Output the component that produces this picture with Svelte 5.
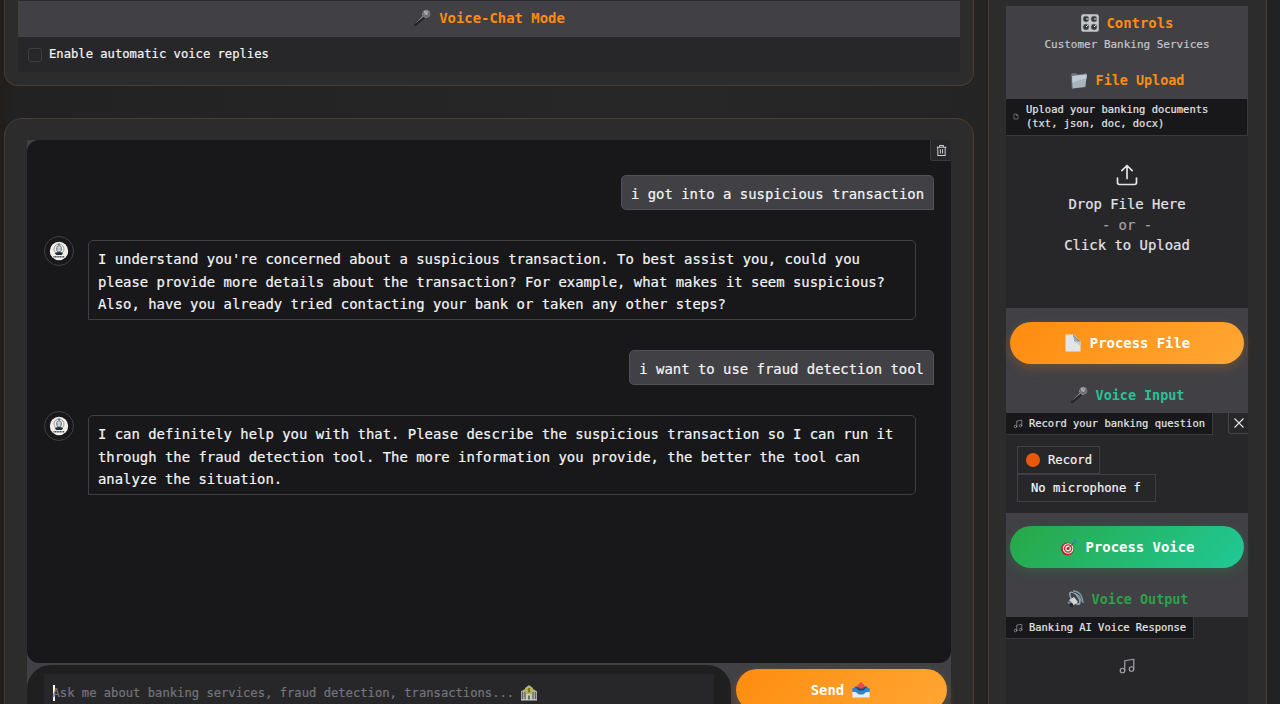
<script>
  const messages = [
    { from: 'user', lines: ['i got into a suspicious transaction'] },
    {
      from: 'bot',
      lines: [
        "I understand you're concerned about a suspicious transaction. To best assist you, could you",
        'please provide more details about the transaction? For example, what makes it seem suspicious?',
        'Also, have you already tried contacting your bank or taken any other steps?'
      ]
    },
    { from: 'user', lines: ['i want to use fraud detection tool'] },
    {
      from: 'bot',
      lines: [
        'I can definitely help you with that. Please describe the suspicious transaction so I can run it',
        'through the fraud detection tool. The more information you provide, the better the tool can',
        'analyze the situation.'
      ]
    }
  ];
</script>

{#snippet mic()}
  <svg class="emoji" viewBox="0 0 18 18">
    <path d="M1 16.6 L2.6 17.3 L12.2 9 L9.2 6 L.8 15.4Z" fill="#242427" />
    <path d="M1.2 15.4 L9.6 6.4 L10.7 7.4Z" fill="#8a8a8e" />
    <path d="M8.8 5.4 L12.5 9.1 L13.8 8.2 L9.8 4.2Z" fill="#c4c4c7" />
    <circle cx="13.3" cy="4.8" r="4" fill="#77777a" />
    <circle cx="13" cy="3.8" r="2.2" fill="#b4b4b7" />
    <path d="M10 3.2 L14.8 8 M12 1.5 L16.6 6.1 M10 6.3 L15 1.3 M12 8 L17 3" stroke="#58585c" stroke-width=".4" />
  </svg>
{/snippet}

{#snippet notes()}
  <svg class="notes" viewBox="0 0 24 24" fill="none" stroke="currentColor" stroke-width="1.6" stroke-linecap="round" stroke-linejoin="round">
    <path d="M9 18V5l12-2v13" /><circle cx="6" cy="18" r="3" /><circle cx="18" cy="16" r="3" />
  </svg>
{/snippet}

<div class="app">
  <main>
    <section class="panel voice-mode">
      <h3 class="bar">{@render mic()}Voice-Chat Mode</h3>
      <label class="check"><span class="box"></span>Enable automatic voice replies</label>
    </section>

    <section class="panel chat-panel">
      <div class="stack">
        <div class="chat">
          <button class="trash" aria-label="Clear">
            <svg viewBox="0 0 12 13" fill="none" stroke="#d0d0d3" stroke-width="1.1">
              <path d="M.8 3h10.4M4 2.8V1h4v1.8M2 3v9h8V3M4.8 5.2v4.6M7.2 5.2v4.6" />
            </svg>
          </button>
          {#each messages as m}
            <div class="row {m.from}">
              {#if m.from === 'bot'}
                <span class="avatar">
                  <svg viewBox="0 0 20 20">
                    <circle cx="10" cy="10" r="9.2" fill="#f2eeea" />
                    <circle cx="10" cy="8" r="5" fill="none" stroke="#6d7980" stroke-width=".7" />
                    <path d="M7.6 7.2a2.4 2.4 0 0 1 4.8 0v1.3a2.4 2.4 0 0 1-4.8 0z" fill="#dbe1e3" stroke="#3e4b55" stroke-width=".7" />
                    <path d="M5.8 12.2q4.2-2.3 8.4 0l-1.6 1.7H7.4z" fill="#202f3a" />
                    <path d="M8.4 8h.9M10.7 8h.9M10 2.4v2" stroke="#26343e" stroke-width=".9" />
                    <path d="M4.4 15.7h11.2" stroke="#4b535a" stroke-width="1.4" stroke-dasharray="1.2 .4" />
                  </svg>
                </span>
              {/if}
              <div class="bubble">
                {#each m.lines as line}<div>{line}</div>{/each}
              </div>
            </div>
          {/each}
        </div>
        <div class="composer">
          <div class="input-wrap">
            <div class="input">
              <span class="caret"></span><span>Ask me about banking services, fraud detection, transactions...</span>
              <svg class="bank" viewBox="0 0 16 16">
                <path d="M0 6.2 4 4V3l4-3 4 3v1l4 2.2V15H0z" fill="#a9aaa0" />
                <path d="M1.5 7v7M4 7v7M12 7v7M14.5 7v7" stroke="#5f625d" stroke-width="1.1" />
                <path d="M5 9h6v6H5z" fill="#c9cbbf" /><path d="M7 10.5h2V15H7z" fill="#53776b" />
                <circle cx="8" cy="5.3" r="3.5" fill="#c3b83c" />
                <path d="M9.3 3.8H7.5q-.9.7 0 1.3h1q1 .9 0 1.6H6.8M8 3v4.6" fill="none" stroke="#585619" stroke-width=".7" />
                <path d="M0 15h16" stroke="#d1d1c8" />
              </svg>
            </div>
          </div>
          <button class="pill orange send">Send
            <svg class="emoji" viewBox="0 0 18 17">
              <path d="M3 5h12l2.6 5H.4z" fill="#2869aa" />
              <path d="M4 6h10l2 4H2z" fill="#194676" />
              <path d="M6.6 7V4.6H4.8L9 .6l4.2 4h-1.8V7z" fill="#ed484d" />
              <path d="M.4 9.5h4.4L7 12h4l2.2-2.5h4.4V16H.4z" fill="#e8eef3" />
              <path d="M.4 6.5h3.8L6.8 9h4.4l2.6-2.5h3.8v4h-3.4L11.3 13H6.7l-2.9-2.5H.4z" fill="#3484cb" />
            </svg>
          </button>
        </div>
      </div>
    </section>
  </main>

  <aside>
    <div class="block head">
      <h3 class="controls">
        <svg class="emoji" viewBox="0 0 18 18">
          <rect x=".2" y=".2" width="17.6" height="17.6" rx="2" fill="#c5c7c9" />
          <g fill="#36383b" stroke="#85888b" stroke-width=".6">
            <circle cx="5" cy="5" r="3" /><circle cx="13" cy="5" r="3" /><circle cx="5" cy="13" r="3" /><circle cx="13" cy="13" r="3" />
          </g>
          <path d="M5 5H7.6M13 5h2.6M5 13l2-1.8M13 13l2-1.8" stroke="#e6e6e6" stroke-width="1" />
        </svg>Controls
      </h3>
      <p>Customer Banking Services</p>
      <h3 class="small">
        <svg class="emoji" viewBox="0 0 18 18">
          <path d="M1 2.6 1.8 1.2h4.5l1 1.3 9-1.3.6 1.6-1.6 12.4L2 16.4z" fill="#6c7883" />
          <path d="M2.4 4 16.8 2.4l-1.5 12.4L2 16.4z" fill="#a8b4be" />
          <path d="M2.4 4 16.8 2.4l-.5 4Q9 7 2.2 11z" fill="#c3cbd2" />
          <path d="M1.2 3 2 16.3" stroke="#53606b" />
        </svg>File Upload
      </h3>
    </div>

    <div class="tag full">
      <svg class="file" viewBox="0 0 24 24" fill="none" stroke="currentColor" stroke-width="2.6">
        <path d="M14 2H4v20h16V8zM14 2v6h6" />
      </svg>
      <span>Upload your banking documents<br />(txt, json, doc, docx)</span>
    </div>
    <div class="drop">
      <svg viewBox="0 0 22 22" fill="none" stroke="#e4e4e7" stroke-width="1.7" stroke-linecap="round" stroke-linejoin="round">
        <path d="M1.5 14v4.6q0 1.9 1.9 1.9h15.2q1.9 0 1.9-1.9V14M11 14.5V1.5M5.8 6.7 11 1.5l5.2 5.2" />
      </svg>
      <span>Drop File Here</span><span class="or">- or -</span><span>Click to Upload</span>
    </div>

    <div class="block action">
      <button class="pill orange">
        <svg class="emoji" viewBox="0 0 18 18">
          <path d="M1.5 .5h8.2L16.5 7v10.5h-15z" fill="#e1e5e8" />
          <path d="M9 .5 16.5 7.6 11 7z" fill="#47525b" /><path d="M9 .5 10.5 7.8 16 8z" fill="#9da8b0" />
          <path d="M10.4 7.5 16.5 7.8V12z" fill="#c6cdd2" />
        </svg>Process File
      </button>
      <h3 class="small teal">{@render mic()}Voice Input</h3>
    </div>

    <div class="recorder">
      <div class="tag-row">
        <div class="tag">{@render notes()}Record your banking question</div>
        <button class="close" aria-label="Close">
          <svg viewBox="0 0 10 10" stroke="#e4e4e7" stroke-width="1.1"><path d="M.5.5l9 9M9.5.5l-9 9" /></svg>
        </button>
      </div>
      <div class="rec-body">
        <button class="record"><i></i>Record</button>
        <div class="device">No microphone f</div>
      </div>
    </div>

    <div class="block action voice">
      <button class="pill green">
        <svg class="emoji" viewBox="0 0 18 18">
          <circle cx="7.5" cy="11" r="6.5" fill="#be2029" /><circle cx="8.1" cy="10.5" r="5.3" fill="#eeeae6" />
          <circle cx="8.1" cy="10.5" r="4.2" fill="#cf2833" /><circle cx="8.1" cy="10.5" r="2.9" fill="#f0ebe7" />
          <circle cx="8.1" cy="10.5" r="1.6" fill="#c72733" />
          <path d="M8 10.5 14 4.5" stroke="#38434d" stroke-width=".9" />
          <path d="M13 5.2V3L15.4.7l.4 2 2 .5-2.3 2z" fill="#338ea5" />
        </svg>Process Voice
      </button>
      <h3 class="small leaf">
        <svg class="emoji" viewBox="0 0 18 18">
          <path d="M7 1q9 0 10 12M8 3.5q6 1 7 8" fill="none" stroke="#809aa5" stroke-width="1.4" />
          <ellipse cx="8.8" cy="8.3" rx="3.8" ry="8" transform="rotate(-38 8.8 8.3)" fill="#9da8ae" />
          <ellipse cx="8.8" cy="8" rx="2.5" ry="6.4" transform="rotate(-38 8.8 8)" fill="#39454b" />
          <path d="M3 10 8 7l4 5-4.4 3.2z" fill="#d0d5d6" /><path d="m1.2 12.5 3-1.8 2.1 2.5-2.6 2.2z" fill="#757f84" />
          <circle cx="5.2" cy="15" r="2.1" fill="#20282d" />
        </svg>Voice Output
      </h3>
    </div>

    <div class="output">
      <div class="tag">{@render notes()}Banking AI Voice Response</div>
      <div class="empty">{@render notes()}</div>
    </div>
  </aside>
</div>

<style>
  :global(body) { background: #232323; }
  * { box-sizing: border-box; }
  .app {
    display: grid; grid-template-columns: 970px 279px; column-gap: 14px; padding-left: 4px;
    height: 704px; overflow: hidden; background: linear-gradient(90deg, #211e1c 0, #222222 1%, #272727 50%, #222 100%);
    color: #f4f4f5; font-family: "DejaVu Sans Mono", "Liberation Mono", monospace; font-size: 13.92px;
    -webkit-text-stroke: .2px currentColor;
  }
  h3, p { margin: 0; }
  h3, .pill { -webkit-text-stroke: 0; }
  button { font: inherit; color: inherit; border: 0; padding: 0; background: none; }
  svg { display: block; flex: none; }
  .emoji { width: 18px; height: 18px; }
  main { display: flex; flex-direction: column; gap: 32px; min-width: 0; height: 704px; }
  .panel { background: #2c2c2c; border: 1px solid #4d3b30; flex: none; }
  .voice-mode { height: 86px; border-top: 0; border-radius: 0 0 14px 14px; padding: 1px 13px 0; }
  .bar {
    height: 36px; background: #404045; color: #ff8c0f; font-size: 13.92px; padding-bottom: 2px;
    display: flex; align-items: center; justify-content: center; gap: 8px;
  }
  .check {
    height: 35px; background: #27272a; display: flex; align-items: center; gap: 7px;
    padding: 0 0 2px 10px; font-size: 12.18px;
  }
  .box { width: 14px; height: 14px; border: 1px solid #3d3d42; border-radius: 3px; margin-top: 2px; }
  .chat-panel { height: 640px; border-radius: 18px; padding: 21px 22px; }
  .stack { background: #404045; width: 924px; display: flex; flex-direction: column; height: 610px; }
  .chat {
    background: #18181b; height: 523px; flex: none; border-radius: 12px; padding: 35px 17px 0;
    display: flex; flex-direction: column; gap: 30px; position: relative;
  }
  .trash {
    position: absolute; top: 0; right: 0; width: 21px; height: 21px; display: grid; place-items: center;
    background: #27272a; border: 1px solid #39393e; border-top: 0; border-right: 0; border-radius: 0 0 0 3px;
  }
  .trash svg { width: 11px; height: 13px; }
  .row { display: flex; }
  .row.user { justify-content: flex-end; }
  .bubble { border: 1px solid #3f3f45; padding: 7px 9px 3px; line-height: 22.6px; white-space: pre; }
  .user .bubble { background: #404045; border-color: #515158; height: 35px; border-radius: 5px 5px 0 5px; }
  .bot .bubble { width: 828px; height: 80px; border-radius: 5px 5px 5px 0; margin-left: 14px; }
  .avatar { width: 30px; height: 30px; border: 1px solid #3f3f45; border-radius: 50%; display: grid; place-items: center; margin-top: -4px; }
  .avatar svg { width: 20px; height: 20px; }
  .composer { display: flex; gap: 5px; padding-top: 2px; height: 87px; }
  .input-wrap { width: 704px; height: 66px; background: #1f1f20; border-radius: 24px; padding: 9px 17px; }
  .input {
    height: 37px; background: #27272a; color: #74747b; font-size: 12.18px; display: flex; align-items: center;
    padding-left: 9px;
  }
  .caret { width: 1.5px; height: 16px; background: #fff; margin-right: -2px; }
  .bank { width: 16px; height: 16px; margin-left: 7px; }
  .pill {
    display: flex; align-items: center; justify-content: center; gap: 8px; width: 234px; height: 42px;
    border-radius: 21px; color: #fff; font-weight: 700;
  }
  .orange { background: linear-gradient(135deg, #ff8c0f, #ffa733); box-shadow: 0 4px 12px rgba(255, 140, 15, .22); }
  .green { background: linear-gradient(135deg, #28a745, #20c997); box-shadow: 0 4px 12px rgba(40, 167, 69, .25); }
  .send { width: 211px; margin-top: 4px; padding-right: 2px; }

  aside {
    background: #2c2c2c; border: solid #4d3b30; border-width: 0 1px; padding: 6px 18px 0 17px; height: 704px;
    display: flex; flex-direction: column;
  }
  .block { background: #404045; flex: none; }
  .head { height: 93px; }
  .block h3 { display: flex; align-items: center; justify-content: center; gap: 8px; color: #ff8c0f; font-size: 13.92px; height: 34px; }
  .block h3.small { font-size: 13.42px; height: 37px; }
  .head p { font-size: 10.97px; text-align: center; color: #c6c6cb; line-height: 18px; height: 22px; margin-top: -4px; }
  .head h3.small { margin-top: 4px; }
  .block h3.teal { color: #2bc095; }
  .block h3.leaf { color: #2ea04a; }
  .tag {
    display: flex; align-items: center; gap: 6px; align-self: flex-start; height: 22px; padding: 0 7px 2px;
    background: #18181b; border: 1px solid #39393e; border-width: 0 1px 1px 0; font-size: 10.45px; color: #e4e4e7;
    white-space: nowrap; flex: none;
  }
  .notes { width: 10px; height: 10px; color: #a1a1aa; }
  .tag .notes { margin-top: 2px; }
  .full { width: 242px; height: 37px; line-height: 14.4px; gap: 7px; }
  .file { width: 6px; height: 7px; color: #86868c; margin-top: 1px; }
  .drop {
    height: 172px; background: #27272a; display: flex; flex-direction: column; align-items: center; flex: none;
    padding-top: 28px; line-height: 20.5px; color: #e4e4e7;
  }
  .drop svg { width: 22px; height: 22px; margin: 0 1px 8px 0; }
  .or { color: #a1a1aa; }
  .action { height: 105px; padding: 14px 4px 0; }
  .action h3.small { height: 42px; margin-top: 10px; }
  .voice { padding-top: 13px; height: 104px; }
  .recorder { height: 100px; background: #27272a; flex: none; }
  .tag-row { display: flex; justify-content: space-between; height: 22px; }
  .close {
    width: 20px; height: 21px; border: 1px solid #45454b; border-width: 0 0 1px 1px; border-radius: 0 0 0 3px;
    display: grid; place-items: center;
  }
  .close svg { width: 10px; height: 10px; }
  .rec-body { padding: 11px; font-size: 12.18px; display: flex; flex-direction: column; align-items: flex-start; }
  .record { width: 83px; height: 28px; border: 1px solid #3f3f46; display: flex; align-items: center; padding-left: 8px; gap: 8px; }
  .record i { width: 14px; height: 14px; background: #ea580c; border-radius: 50%; }
  .device { width: 139px; height: 28px; border: 1px solid #3f3f46; line-height: 26px; padding-left: 13px; }
  .output { flex: 1; background: #27272a; display: flex; flex-direction: column; }
  .empty { display: flex; justify-content: center; padding-top: 18px; }
  .empty .notes { width: 18px; height: 18px; }
</style>
